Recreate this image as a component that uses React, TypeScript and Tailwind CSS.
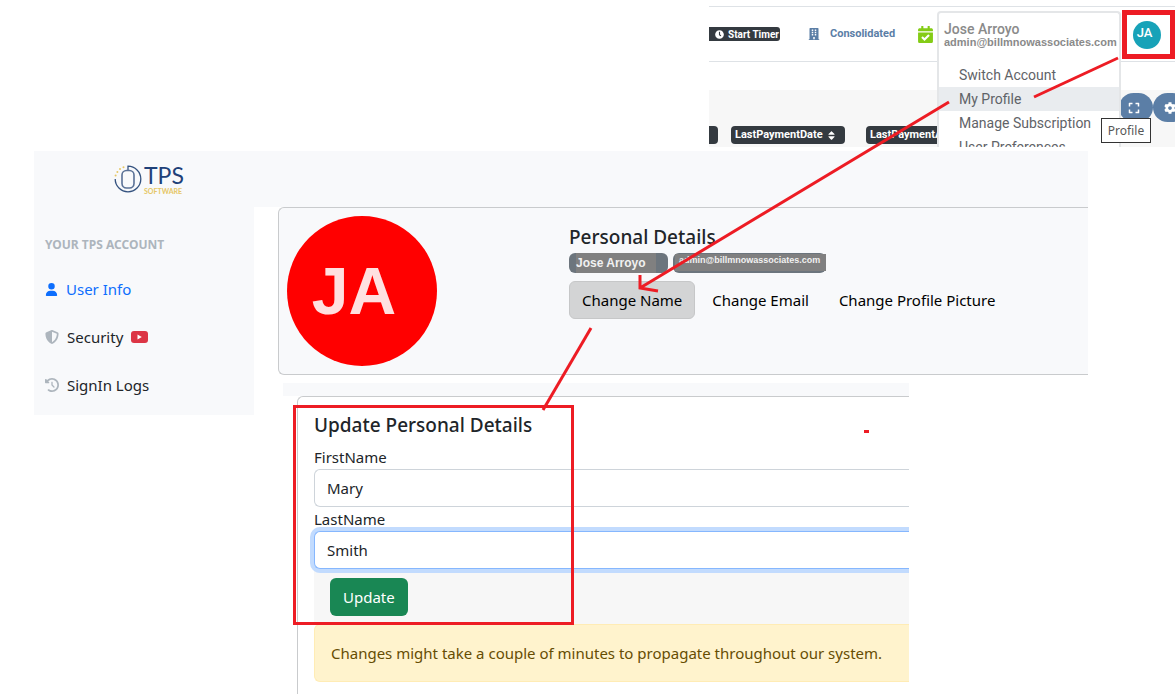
import type { ReactNode } from 'react';
import { FaClock, FaBuilding, FaCalendarCheck, FaSort, FaExpand, FaCog } from 'react-icons/fa';
import { FaUser, FaShieldHalved, FaClockRotateLeft } from 'react-icons/fa6';

const MENU = ['Switch Account', 'My Profile', 'Manage Subscription', 'User Preferences'];

function YoutubeIcon() {
    return (
        <svg width="17" height="12" viewBox="0 0 17 12" aria-hidden="true">
            <rect width="17" height="12" rx="3" fill="#dc3545" />
            <path d="M6.5 3.6v4.8l4.3-2.4z" fill="#fff" />
        </svg>
    );
}

const NAV: { label: string; icon: ReactNode; active?: boolean; extra?: ReactNode }[] = [
    { label: 'User Info', icon: <FaUser size={13} className="text-[#0d6efd]" />, active: true },
    { label: 'Security', icon: <FaShieldHalved size={14} className="text-[#adb5bd]" />, extra: <YoutubeIcon /> },
    { label: 'SignIn Logs', icon: <FaClockRotateLeft size={14} className="text-[#adb5bd]" /> },
];

function Logo() {
    return (
        <a href="#home" aria-label="TPS Software" className="flex items-center gap-0.5 font-[Lato,sans-serif]">
            <svg width="28" height="28" viewBox="0 0 28 28" fill="none" aria-hidden="true">
                <path d="M14 5V1.2A12.8 12.8 0 1 1 1.2 14" stroke="#34527f" strokeWidth="1.3" />
                <rect x="8" y="5.5" width="12" height="17.5" rx="4.5" stroke="#5a7196" strokeWidth="1.6" />
                <g fill="#e6c766">
                    <circle cx="1.6" cy="10.5" r="1" />
                    <circle cx="3.4" cy="7" r="1" />
                    <circle cx="6" cy="4" r="1" />
                    <circle cx="9.5" cy="2.2" r="1" />
                </g>
            </svg>
            <span className="flex flex-col">
                <span className="text-[23px] leading-[23px] text-[#1f4179]">TPS</span>
                <span className="text-[7px] leading-[8px] font-bold text-[#e6c766]">SOFTWARE</span>
            </span>
        </a>
    );
}

function AccountMenu() {
    return (
        <div className="absolute top-[11px] left-[228px] h-[136px] w-[184px] overflow-hidden rounded-t border-2 border-b-0 border-[#e4e6e8] bg-white">
            <div className="h-[50px] pt-[9px] pl-[5px] font-['Liberation_Sans',Arial,sans-serif] text-[#8a8a8a]">
                <div className="font-[Roboto,sans-serif] text-[14px] leading-[14px] font-medium">Jose Arroyo</div>
                <div className="text-[11px] leading-[12px] font-bold">admin@billmnowassociates.com</div>
            </div>
            <ul>
                {MENU.map((item) => (
                    <li key={item}>
                        <a
                            href="#menu"
                            className={`block h-6 pl-5 text-[14px] leading-6 whitespace-nowrap text-[#5f6368] ${item === 'My Profile' ? 'bg-[#e9ecef]' : ''}`}
                        >
                            {item}
                        </a>
                    </li>
                ))}
            </ul>
        </div>
    );
}

function TopBar() {
    return (
        <header className="relative ml-[709px] h-[151px] overflow-hidden font-[Roboto,sans-serif]">
            <div className="mt-1.5 flex h-14 items-center border-y border-[#dee2e6]">
                <button className="flex h-3.5 w-[71px] items-center gap-1 rounded-r-[3px] bg-[#343a40] pl-1.5 text-[10px] font-bold whitespace-nowrap text-white">
                    <FaClock size={9} className="shrink-0" />
                    Start Timer
                </button>
                <a href="#consolidated" className="ml-7 flex items-center gap-2.5 text-[11px] font-bold text-[#5b7ea6]">
                    <FaBuilding size={12} />
                    Consolidated
                </a>
                <FaCalendarCheck size={17} className="ml-[22px] shrink-0 text-[#84cc16]" />
            </div>
            <div className="mt-7 flex h-[57px] items-end gap-[13px] overflow-hidden bg-[#f7f7f7] pb-[3px] text-[11px] font-bold text-white">
                <span className="h-[18px] w-[9px] shrink-0 rounded-r bg-[#343a40]" />
                <button className="flex h-[18px] w-[114px] shrink-0 items-center justify-between rounded bg-[#343a40] pr-2 pl-1">
                    LastPaymentDate
                    <FaSort size={11} />
                </button>
                <button className="ml-2 h-[18px] w-[130px] shrink-0 rounded bg-[#343a40] pl-1 text-left">LastPaymentAmount</button>
            </div>
            <span className="absolute top-[11px] left-[257px] size-3 rounded-full bg-[#dc3545]" />
            <div className="absolute top-[93px] left-[410px] flex">
                <button aria-label="Full screen" className="flex h-[29px] w-[34px] items-center justify-center rounded-full bg-[#5b7ea6] pr-1 text-white">
                    <FaExpand size={12} />
                </button>
                <button aria-label="Settings" className="flex h-[29px] w-[34px] items-center justify-center rounded-full bg-[#5b7ea6] text-white">
                    <FaCog size={12} />
                </button>
            </div>
            <AccountMenu />
            <div className="absolute top-[10px] left-[413px] flex h-[49px] w-[53px] items-center justify-center border-[5px] border-[#ed1c24] bg-white pr-1">
                <button className="size-7 rounded-full bg-[#17a2b8] pr-1 pb-1 text-[13px] font-medium text-white">JA</button>
            </div>
            <div
                role="tooltip"
                className="absolute top-[118px] left-[392px] h-[25px] w-[50px] border border-[#333] bg-white text-center font-['Noto_Sans',sans-serif] text-[12px] leading-[23px] text-[#575757]"
            >
                Profile
            </div>
        </header>
    );
}

function ProfileCard() {
    return (
        <section className="flex rounded-l-md border border-r-0 border-[#c9cbcd] bg-[#f8f9fb] p-2">
            <div className="flex size-[150px] shrink-0 items-center justify-center rounded-full bg-[red] pr-4 font-['Liberation_Sans',Arial,sans-serif] text-[66px] font-bold text-[#ffe0e0]">
                JA
            </div>
            <div className="ml-[132px] pt-[9px]">
                <h2 className="text-[19px] leading-6 font-medium">Personal Details</h2>
                <div className="mt-1 flex h-5 gap-[5px] font-['Liberation_Sans',Arial,sans-serif] font-bold text-[#f1f1f1]">
                    <span className="w-[99px] rounded-md bg-[#6c757d] pl-[7px]">
                        <span className="block w-20 bg-[#808080] text-[12px] leading-5">Jose Arroyo</span>
                    </span>
                    <span className="w-[153px] rounded-md bg-[#6c757d] pl-0.5">
                        <span className="mt-px block h-[17px] w-[151px] bg-[#808080] pl-1 text-[9px] leading-3 whitespace-nowrap">admin@billmnowassociates.com</span>
                    </span>
                </div>
                <div className="mt-2 flex gap-1 text-[15px] text-black">
                    <button className="h-[38px] rounded-md border border-[#c6c7c8] bg-[#d3d4d5] px-3">Change Name</button>
                    <button className="h-[38px] px-[13px]">Change Email</button>
                    <button className="h-[38px] px-[13px]">Change Profile Picture</button>
                </div>
            </div>
        </section>
    );
}

function UpdateForm() {
    return (
        <section className="mt-2 mr-[179px] ml-[5px] overflow-hidden">
            <div className="h-[13px] bg-[#f8f9fb]" />
            <form className="ml-3.5 rounded-tl-md border-t border-l border-[#c9cbcd] pt-4 pb-3 pl-4 text-[15px]">
                <h2 className="mb-2 text-[19px] leading-6 font-medium">Update Personal Details</h2>
                <label htmlFor="first" className="block leading-6">FirstName</label>
                <input
                    id="first"
                    defaultValue="Mary"
                    className="block h-[38px] w-full rounded-l-md border border-r-0 border-[#ced4da] bg-white px-3"
                />
                <label htmlFor="last" className="block leading-6">LastName</label>
                <input
                    id="last"
                    defaultValue="Smith"
                    className="relative block h-[38px] w-full rounded-l-md border border-r-0 border-[#86b7fe] bg-white px-3 ring-4 ring-[#c2dbfe] outline-none"
                />
                <div className="bg-[#f7f7f7] pt-[9px] pb-2 pl-4">
                    <button type="button" className="h-[38px] rounded-md bg-[#198754] px-[13px] text-white">Update</button>
                </div>
                <p className="rounded-l-md border border-r-0 border-[#ffecb5] bg-[#fff3cd] p-4 leading-6 whitespace-nowrap text-[#664d03]">
                    Changes might take a couple of minutes to propagate throughout our system.
                </p>
            </form>
        </section>
    );
}

// Red pen marks that walk the reader through the steps
function Annotations() {
    return (
        <svg className="pointer-events-none absolute top-0 left-0" width="1175" height="694" fill="none" stroke="#ed1c24" strokeWidth="3" aria-hidden="true">
            <path d="M1118 58 1034 97" />
            <path d="M949 102 640 288M640 275v13l18 3" />
            <path d="M591 328 543 410" />
            <rect x="294.5" y="406.5" width="278" height="217" />
            <path d="M864 431.5h5" />
        </svg>
    );
}

export default function App() {
    return (
        <div className="relative min-h-screen overflow-hidden bg-white font-['Noto_Sans','Open_Sans',sans-serif] text-[#212529]">
            <TopBar />
            <div className="mr-[87px] ml-[34px]">
                <div className="flex h-14 items-center bg-[#f8f9fb] pl-20">
                    <Logo />
                </div>
                <div className="flex items-start">
                    <aside className="w-[220px] shrink-0 bg-[#f8f9fb] pt-7 pb-1.5 pl-[11px]">
                        <h3 className="mb-2.5 text-[12px] leading-5 font-bold text-[#adb5bd]">YOUR TPS ACCOUNT</h3>
                        <nav>
                            {NAV.map(({ label, icon, active, extra }) => (
                                <a
                                    key={label}
                                    href="#account"
                                    className={`flex h-12 items-center gap-2 text-[15px] ${active ? 'text-[#0d6efd]' : ''}`}
                                >
                                    {icon}
                                    {label}
                                    {extra}
                                </a>
                            ))}
                        </nav>
                    </aside>
                    <main className="min-w-0 flex-1 pl-6">
                        <ProfileCard />
                        <UpdateForm />
                    </main>
                </div>
            </div>
            <Annotations />
        </div>
    );
}
